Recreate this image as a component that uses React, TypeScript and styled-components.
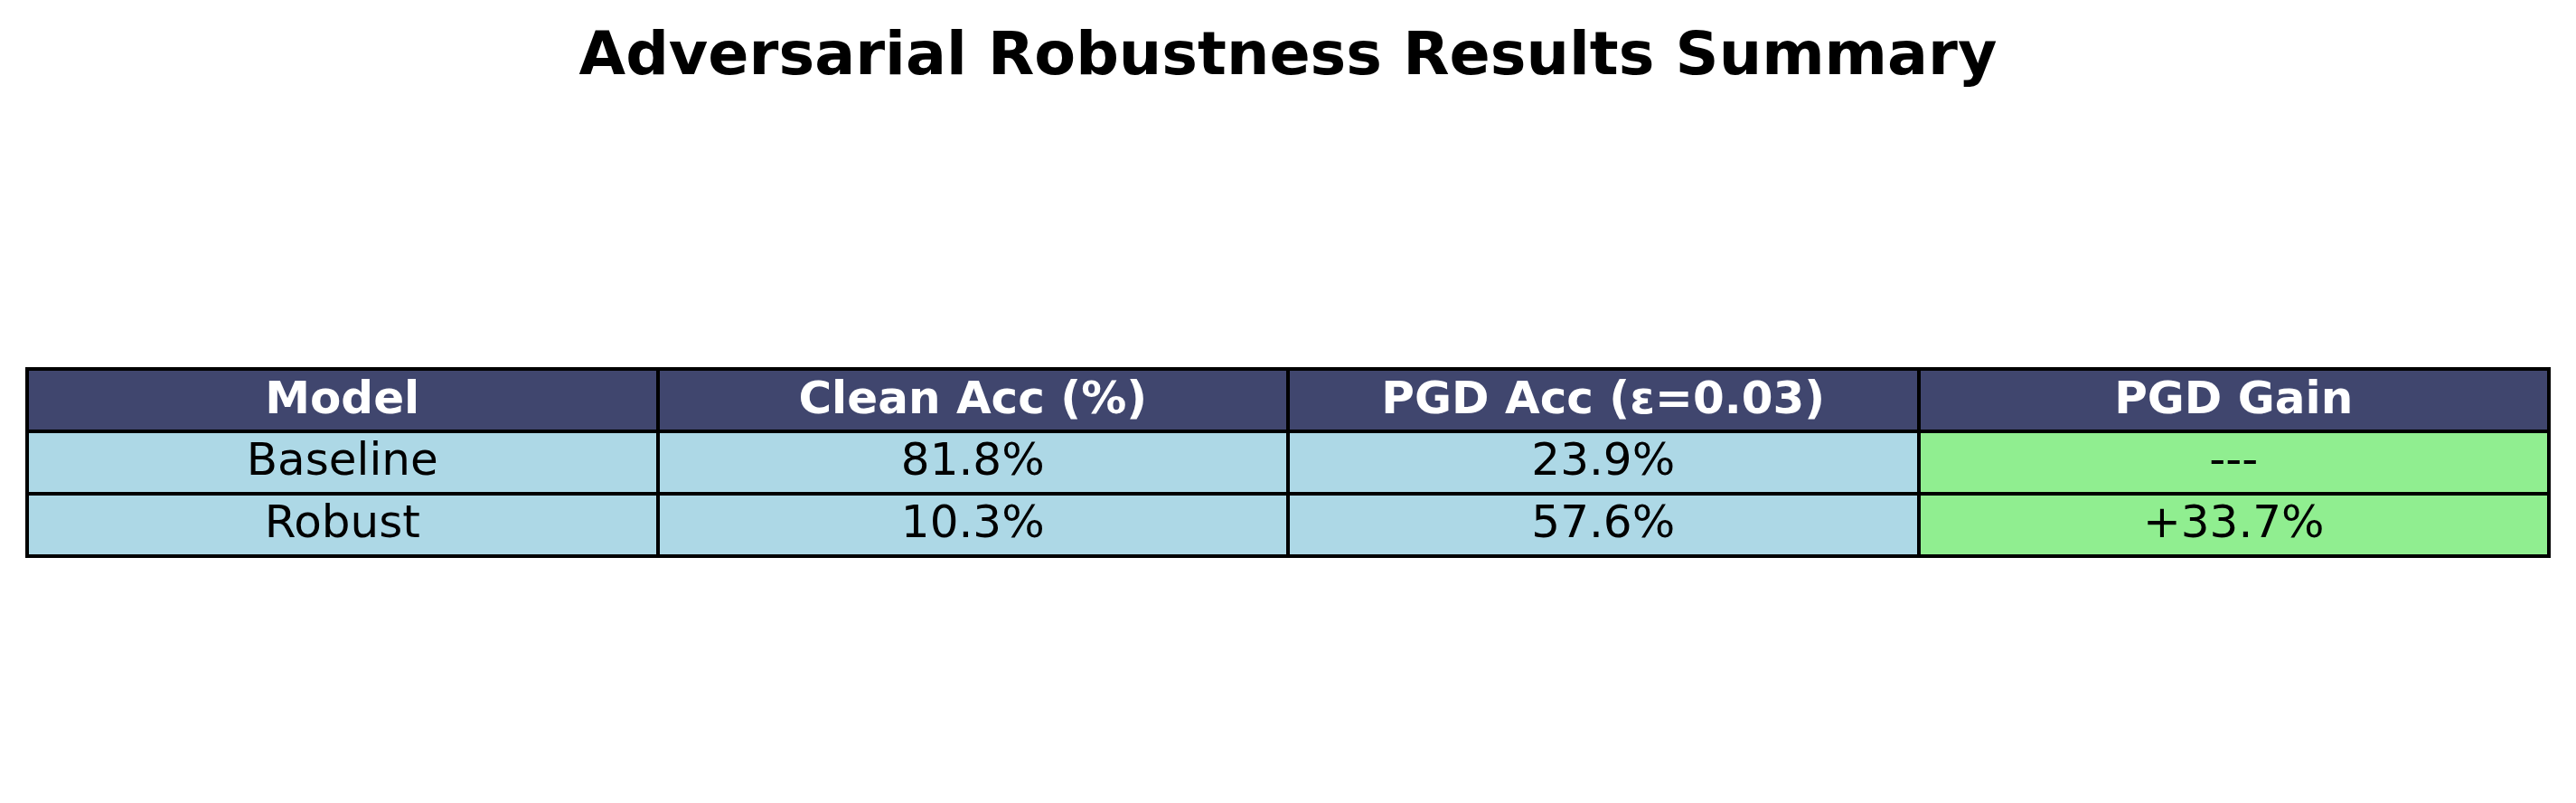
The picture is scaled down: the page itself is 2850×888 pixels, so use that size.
import React from 'react';
import styled, { createGlobalStyle } from 'styled-components';

const GlobalStyle = createGlobalStyle`
  html, body {
    margin: 0;
    padding: 0;
    background: #ffffff;
  }
  body {
    font-family: 'DejaVu Sans', 'Liberation Sans', sans-serif;
  }
`;

const Page = styled.div`
  width: 2850px;
  height: 888px;
  display: flex;
  flex-direction: column;
  background: #ffffff;
`;

const Title = styled.h1`
  margin: 0;
  padding-top: 20px;
  font-size: 66.7px;
  font-weight: 700;
  line-height: normal;
  text-align: center;
  color: #000000;
`;

const Table = styled.div`
  margin: 308px 0 0 28px;
  width: 2794px;
  box-sizing: border-box;
  display: grid;
  grid-template-columns: repeat(4, 1fr);
  grid-auto-rows: 65px;
  gap: 4px;
  padding: 4px;
  background: #000000;
`;

const Cell = styled.div<{ $bg: string; $header?: boolean }>`
  display: flex;
  align-items: center;
  justify-content: center;
  box-sizing: border-box;
  padding-bottom: ${(p) => (p.$header ? '5px' : '7px')};
  background: ${(p) => p.$bg};
  color: ${(p) => (p.$header ? '#ffffff' : '#000000')};
  font-size: 50px;
  font-weight: ${(p) => (p.$header ? 700 : 400)};
  line-height: normal;
  white-space: nowrap;
`;

const headers = ['Model', 'Clean Acc (%)', 'PGD Acc (ε=0.03)', 'PGD Gain'];

const rows = [
  ['Baseline', '81.8%', '23.9%', '---'],
  ['Robust', '10.3%', '57.6%', '+33.7%'],
];

export default function App() {
  return (
    <Page>
      <GlobalStyle />
      <Title>Adversarial Robustness Results Summary</Title>
      <Table>
        {headers.map((h) => (
          <Cell key={h} $bg="#40466e" $header>
            {h}
          </Cell>
        ))}
        {rows.map((row, r) =>
          row.map((value, c) => (
            <Cell key={`${r}-${c}`} $bg={c === 3 ? '#90ee90' : '#add8e6'}>
              {value}
            </Cell>
          ))
        )}
      </Table>
    </Page>
  );
}
